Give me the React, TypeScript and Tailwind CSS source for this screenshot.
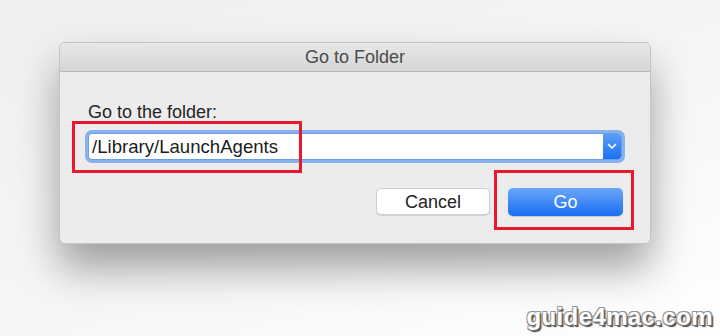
import React from "react";

export default function App() {
  return (
    <div className="relative w-[720px] h-[336px] overflow-hidden bg-[linear-gradient(160deg,#efefef_0%,#f6f6f6_55%,#ffffff_100%)] pl-[59px] pt-[42px] font-['Liberation_Sans',Arial,sans-serif]">
      <div className="w-[592px] h-[202px] rounded-[6px] border border-[#c4c4c4] bg-[#ececec] shadow-[0_24px_42px_rgba(0,0,0,0.36)] flex flex-col overflow-hidden">
        <div className="h-[29px] shrink-0 border-b border-[#b9b9b9] bg-[linear-gradient(#e7e7e7,#d6d6d6)] flex items-center justify-center text-[18px] leading-[22px] text-[#4b4b4b]">
          Go to Folder
        </div>
        <div className="flex flex-col px-[25px] pt-[29px]">
          <div className="pl-[3px] text-[18px] leading-[22px] text-[#242424]">Go to the folder:</div>
          <div className="mt-[7px] h-[33px] rounded-[7px] bg-[#88b2ee] p-[3px]">
            <div className="h-[27px] rounded-[4px] border border-[#6d9de6] bg-white flex overflow-hidden">
              <div className="flex-1 pl-[3px] pt-[1px] text-[18.6px] leading-[24px] text-[#1c1c1c]">/Library/LaunchAgents</div>
              <div className="w-[18px] h-full bg-[linear-gradient(#5d9df8,#1b6ff4)] flex items-center justify-center">
                <svg width="10" height="7" viewBox="0 0 10 7">
                  <polyline points="1.5,1.5 5,5 8.5,1.5" fill="none" stroke="white" strokeWidth="1.7" strokeLinecap="round" strokeLinejoin="round" />
                </svg>
              </div>
            </div>
          </div>
          <div className="mt-[25px] flex justify-end gap-[18px] pr-[2px]">
            <div className="w-[114px] h-[27px] rounded-[5px] bg-white border border-[#cfcfcf] shadow-[0_1px_1px_rgba(0,0,0,0.12)] flex items-center justify-center pt-px text-[18px] text-[#222]">
              Cancel
            </div>
            <div className="w-[115px] h-[28px] rounded-[5px] bg-[linear-gradient(#6aa7f9,#1a6df4)] shadow-[0_1px_1px_rgba(0,0,0,0.15)] flex items-center justify-center text-[18px] text-white">
              Go
            </div>
          </div>
        </div>
      </div>

      <div className="absolute left-[72px] top-[121px] w-[230px] h-[52px] border-[3px] border-[#e8192c]" />
      <div className="absolute left-[494px] top-[170px] w-[140px] h-[60px] border-[3px] border-[#e8192c]" />

      <div className="absolute right-[7px] top-[303px] whitespace-nowrap text-[24px] leading-[28px] font-bold text-white tracking-[0.4px] [text-shadow:1px_1px_0_#6b6b6b,-1px_-1px_0_#9a9a9a,1px_-1px_0_#8a8a8a,-1px_1px_0_#8a8a8a,2px_2px_1px_#444]">
        guide4mac.com
      </div>
    </div>
  );
}
